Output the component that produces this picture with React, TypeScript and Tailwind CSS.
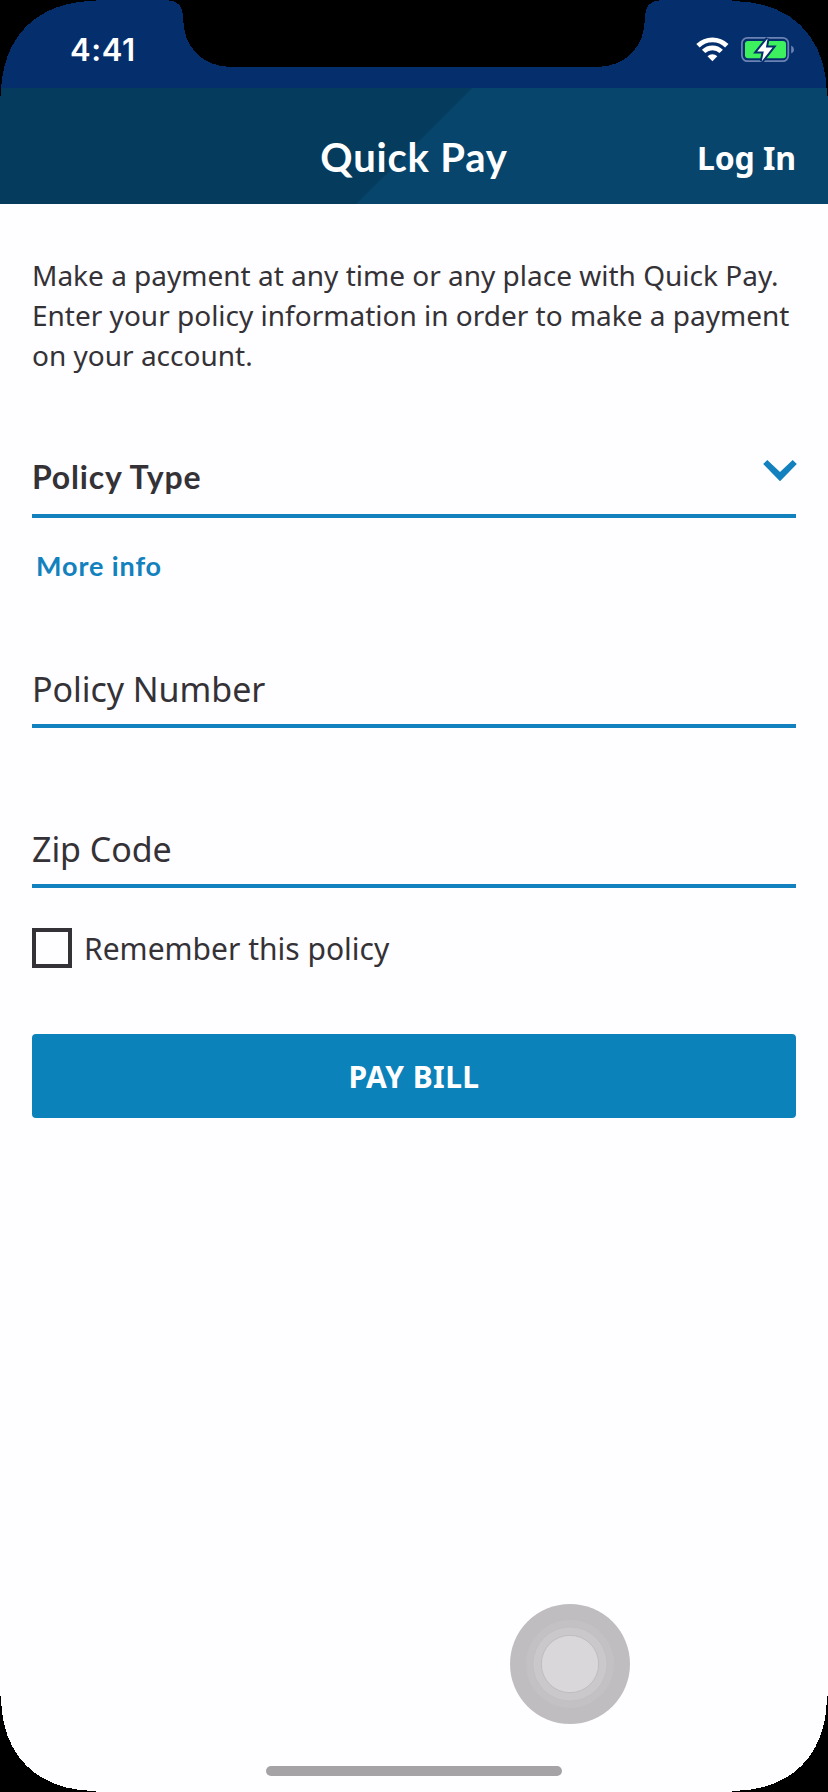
import React from "react";

function StatusIcons() {
  return (
    <svg className="h-[88px] w-[228px]" viewBox="600 0 228 88" aria-hidden="true">
      <g fill="none" stroke="#fff" strokeWidth="4.8">
        <path d="M698 45.7 A20.5 20.5 0 0 1 726.8 45.7" />
        <path d="M703.6 51.4 A12.6 12.6 0 0 1 721.2 51.4" />
      </g>
      <path d="M712.4 61.2 L707.5 56.3 A7 7 0 0 1 717.3 56.3 Z" fill="#fff" />
      <rect x="741.9" y="37.8" width="46.4" height="23.4" rx="5.6" fill="none" stroke="#6b83b2" strokeWidth="1.7" />
      <path d="M791.2 45.6 Q794 47 794 49.7 Q794 52.4 791.2 53.6 Z" fill="#6b83b2" />
      <rect x="745" y="41" width="41" height="17.2" rx="3" fill="#3df05e" />
      <path d="M767.6 38.5 L757.2 51.5 L763.8 51.5 L761.8 61.2 L772.6 47.4 L765.9 47.4 Z" fill="#fff" stroke="#052f6c" strokeWidth="4" strokeLinejoin="miter" />
      <path d="M767.6 38.5 L757.2 51.5 L763.8 51.5 L761.8 61.2 L772.6 47.4 L765.9 47.4 Z" fill="#fff" />
    </svg>
  );
}

function DeviceFrame() {
  return (
    <svg className="pointer-events-none absolute inset-0 h-[1792px] w-[828px]" viewBox="0 0 828 1792" shapeRendering="crispEdges" aria-hidden="true">
      <path d="M0 0H96V1C37 1 1 37 1 96H0Z" />
      <path d="M828 0H732V1C791 1 827 37 827 96H828Z" />
      <path d="M0 1792H96V1791C37 1791 1 1755 1 1696H0Z" />
      <path d="M828 1792H732V1791C791 1791 827 1755 827 1696H828Z" />
      <path d="M166 0 C178 1 183 5 183 17 C183 47 202 67 232 67 H596 C626 67 645 47 645 17 C645 5 650 1 662 0 Z" />
    </svg>
  );
}

function Field({ label }: { label: string }) {
  return (
    <div className="h-[59px] border-b-4 border-[#1281bd] text-[34px] leading-10 tracking-[-0.05px]">
      <span className="block whitespace-nowrap">{label}</span>
    </div>
  );
}

export default function App() {
  return (
    <div className="relative h-[1792px] w-[828px] overflow-hidden bg-[#fefdff] font-['Noto_Sans',sans-serif] text-[#343236]">
      <div className="flex h-[88px] justify-between bg-[#052f6c]">
        <span className="pt-[30px] pl-[70px] font-['Inter',sans-serif] text-[31px] leading-10 font-semibold tracking-[0.6px] text-white">4:41</span>
        <StatusIcons />
      </div>
      <header className="grid h-[116px] grid-cols-[1fr_auto_1fr] bg-[linear-gradient(135deg,#053b5d_333.5px,#07456d_334.5px)] text-white">
        <h1 className="col-start-2 pt-[45px] font-['Lato',sans-serif] text-[40px] leading-[48px] font-bold tracking-[0.8px]">Quick Pay</h1>
        <a className="justify-self-end pt-[50px] pr-8 text-[32px] leading-10 font-bold tracking-[-0.1px]">Log In</a>
      </header>
      <main className="px-8">
        <p className="pt-[51px] text-[28px] leading-10 whitespace-nowrap">
          Make a payment at any time or any place with Quick Pay.
          <br />
          Enter your policy information in order to make a payment
          <br />
          on your account.
        </p>
        <div className="mt-[81px] flex h-[62px] justify-between border-b-4 border-[#1281bd]">
          <span className="pt-px font-['Lato',sans-serif] text-[32px] leading-10 font-bold tracking-[0.8px]">Policy Type</span>
          <svg className="mt-1 -mr-px h-[22px] w-[34px]" viewBox="763 460 34 22" aria-hidden="true">
            <path d="M763.2 464 L767.3 460 L780 472 L792.7 460 L796.8 464 L780 481.2 Z" fill="#1281bd" />
          </svg>
        </div>
        <a className="mt-7 block h-10 pl-1 font-['Lato',sans-serif] text-[27px] leading-10 font-bold tracking-[0.9px] text-[#1281bd]">More info</a>
        <div className="mt-[83px]"><Field label="Policy Number" /></div>
        <div className="mt-[101px]"><Field label="Zip Code" /></div>
        <label className="mt-10 flex h-10 gap-3">
          <span className="size-10 border-4 border-[#343236]" />
          <span className="pt-px text-[30px] leading-10">Remember this policy</span>
        </label>
        <button className="mt-[66px] flex h-[84px] w-full items-center justify-center rounded-[4px] bg-[#0c82bb] pt-0.5 text-[30px] leading-10 font-bold tracking-[0.4px] text-white">PAY BILL</button>
      </main>
      <svg className="absolute top-[1604px] left-[510px] size-[120px]" viewBox="0 0 120 120" aria-hidden="true">
        <circle cx="60" cy="60" r="60" fill="#bfbdc0" />
        <circle cx="60" cy="60" r="44" fill="#c3c1c4" />
        <circle cx="60" cy="60" r="37" fill="#cac8cb" stroke="#bfbdc0" strokeWidth=".7" />
        <circle cx="60" cy="60" r="28.7" fill="#d9d7da" stroke="#bfbdc0" strokeWidth="1" />
      </svg>
      <div className="absolute top-[1766px] left-[266px] h-[10px] w-[296px] rounded-full bg-[#a5a3a6]" />
      <DeviceFrame />
    </div>
  );
}
